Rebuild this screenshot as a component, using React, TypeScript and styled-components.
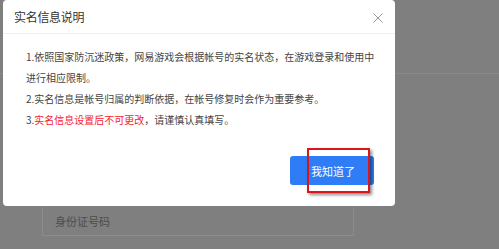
import React from "react";
import styled, { createGlobalStyle } from "styled-components";

const Global = createGlobalStyle`
  html, body { margin: 0; padding: 0; }
  body {
    background: #7f7f7f;
    font-family: "Noto Sans CJK SC", "Noto Sans", sans-serif;
    width: 499px;
    height: 249px;
    overflow: hidden;
  }
`;

const Page = styled.div`
  position: relative;
  width: 499px;
  height: 249px;
  display: flex;
  flex-direction: column;
`;

const Divider = styled.div`
  margin-top: 73px;
  height: 1px;
  background: #8a8a8a;
`;

const FieldBox = styled.div`
  margin: 133px 0 0 42px;
  width: 312px;
  height: 29px;
  border: 1px solid #8c8c8c;
  border-top: none;
  display: flex;
  align-items: center;
  padding-left: 12px;
  box-sizing: border-box;
  font-size: 11px;
  color: #4d4d4d;
`;

const Dialog = styled.div`
  position: absolute;
  left: 3px;
  top: 0;
  width: 392px;
  height: 206px;
  background: #fff;
  border-radius: 4px;
  display: flex;
  flex-direction: column;
`;

const Header = styled.div`
  height: 33px;
  border-bottom: 1px solid #f0f0f0;
  display: flex;
  align-items: center;
  justify-content: space-between;
  padding: 0 12px 0 11px;
`;

const Title = styled.div`
  font-size: 12px;
  color: #333;
  letter-spacing: -0.3px;
`;

const Close = styled.svg`
  width: 10px;
  height: 10px;
  margin-top: 2px;
`;

const Body = styled.div`
  flex: 1;
  padding: 12px 20px 0 23px;
  font-size: 10px;
  line-height: 21px;
  color: #444;
`;

const Line = styled.div``;

const Red = styled.span`
  color: #f5222d;
`;

const Footer = styled.div`
  display: flex;
  justify-content: flex-end;
  padding: 0 21px 21px 0;
`;

const Button = styled.div`
  position: relative;
  width: 84px;
  height: 29px;
  background: #2f7df6;
  border-radius: 3px;
  color: #fff;
  font-size: 11px;
  display: flex;
  align-items: center;
  justify-content: center;
  padding-left: 2px;
  box-sizing: border-box;
`;

const Highlight = styled.div`
  position: absolute;
  left: 17px;
  top: -8px;
  width: 63px;
  height: 45px;
  border: 2px solid #d9161c;
  box-sizing: border-box;
  box-shadow: 2px 2px 3px rgba(0, 0, 0, 0.45);
`;

export default function App() {
  return (
    <>
      <Global />
      <Page>
        <Divider />
        <FieldBox>身份证号码</FieldBox>
        <Dialog>
          <Header>
            <Title>实名信息说明</Title>
            <Close viewBox="0 0 10 10">
              <path d="M0.5 0.5 L9.5 9.5 M9.5 0.5 L0.5 9.5" stroke="#999" strokeWidth="1" fill="none" />
            </Close>
          </Header>
          <Body>
            <Line>1.依照国家防沉迷政策，网易游戏会根据帐号的实名状态，在游戏登录和使用中</Line>
            <Line>进行相应限制。</Line>
            <Line>2.实名信息是帐号归属的判断依据，在帐号修复时会作为重要参考。</Line>
            <Line>
              3.<Red>实名信息设置后不可更改</Red>，请谨慎认真填写。
            </Line>
          </Body>
          <Footer>
            <Button>
              我知道了
              <Highlight />
            </Button>
          </Footer>
        </Dialog>
      </Page>
    </>
  );
}
